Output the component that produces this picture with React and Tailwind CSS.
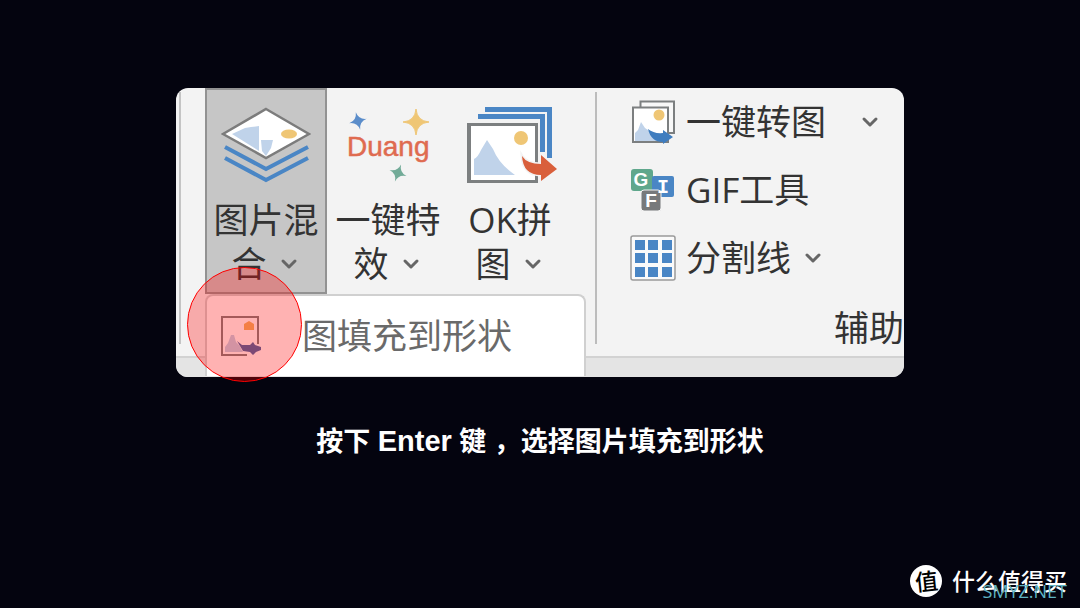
import { ChevronDown } from 'lucide-react'

function LayersIcon() {
  return (
    <svg width="90" height="80" viewBox="0 0 90 80" fill="none" aria-hidden="true">
      <path d="M4 52 45 74 87 52M4 41 45 63 87 41" stroke="#4a86c5" strokeWidth="4" />
      <path d="M45 3 88 28 45 52 2 28Z" fill="#fff" stroke="#7c7c7c" strokeWidth="2.5" />
      <path d="M11 28 24 22 30 21 38 20V45Z" fill="#c0d3ea" />
      <path d="M40 34H52L50 42 45 50 41 45Z" fill="#c0d3ea" />
      <ellipse cx="68" cy="28" rx="8" ry="4.5" fill="#efc675" />
    </svg>
  )
}

function DuangIcon() {
  return (
    <svg width="90" height="80" viewBox="0 0 90 80" aria-hidden="true">
      <path
        d="M0-9Q1-1 9 0 1 1 0 9-1 1-9 0-1-1 0-9Z"
        transform="translate(15 15) rotate(-14)"
        fill="#5b8dca"
      />
      <path d="M73 3Q74 15 86 16 74 17 73 29 72 17 60 16 72 15 73 3Z" fill="#efc675" stroke="#efc675" />
      <path
        d="M0-9Q1-1 9 0 1 1 0 9-1 1-9 0-1-1 0-9Z"
        transform="translate(55 67) rotate(20)"
        fill="#72ab98"
      />
      <text x="4" y="50" fontSize="28" fill="#df6b50" stroke="#df6b50" strokeWidth="0.5" className="font-['Liberation_Sans',sans-serif]">
        Duang
      </text>
    </svg>
  )
}

function StackedPicturesIcon() {
  return (
    <svg width="94" height="80" viewBox="-4 0 94 80" fill="none" aria-hidden="true">
      <path d="M18 3.5H82.5V52" stroke="#4a86c5" strokeWidth="5" />
      <path d="M11 10.5H75.5V46" stroke="#4a86c5" strokeWidth="5" />
      <path d="M0 17H71V77H0Z" fill="#7c7f80" />
      <path d="M4 20H68V74H4Z" fill="#fff" />
      <path d="M7 69V53Q11 51 14 44L20 34 26 43Q32 58 48 69Z" fill="#c0d3ea" />
      <circle cx="54" cy="32" r="7" fill="#efc675" />
      <path
        d="M55 50Q60 58 74 58V49L90 63 74 75V69Q56 69 55 50Z"
        fill="#d95f3b"
        stroke="#f3f3f3"
        strokeWidth="3"
        paintOrder="stroke"
      />
    </svg>
  )
}

function ConvertPictureIcon() {
  return (
    <svg width="46" height="46" viewBox="0 0 46 46" fill="none" aria-hidden="true">
      <path d="M10.5 2.5H44V34H10.5Z" fill="#f8f8f8" stroke="#7c7f80" strokeWidth="2" />
      <path d="M3 8.5H38V43H3Z" fill="#fff" stroke="#7c7f80" strokeWidth="2" />
      <path d="M5 42V34L8 31 11 23 15 29 18 31 27 42Z" fill="#c0d3ea" />
      <circle cx="29" cy="16" r="5.5" fill="#efc675" />
      <path d="M18 30Q24 35 33 34V31L43 38 33 45V43Q21 43 18 30Z" fill="#3f7dbf" />
    </svg>
  )
}

function GifIcon() {
  return (
    <svg
      width="46"
      height="46"
      viewBox="0 0 46 46"
      fontWeight="700"
      fill="#fff"
      textAnchor="middle"
      className="font-['Liberation_Sans',sans-serif]"
      aria-hidden="true"
    >
      <rect x="1" y="2" width="22" height="22" rx="3" fill="#5fa78c" />
      <rect x="22" y="9" width="22" height="21" rx="2" fill="#4a86c5" />
      <rect x="11" y="23" width="20" height="21" rx="3" fill="#77797b" stroke="#f3f3f3" strokeWidth="1" />
      <text x="11" y="19" fontSize="19">G</text>
      <text x="33" y="26" fontSize="20" className="font-['Liberation_Mono',monospace]">I</text>
      <text x="21" y="40" fontSize="19">F</text>
    </svg>
  )
}

function GridIcon() {
  const steps = [5, 18, 32]
  return (
    <svg width="46" height="46" viewBox="0 0 46 46" aria-hidden="true">
      <rect x="1" y="1" width="44" height="44" rx="2" fill="#fafafa" stroke="#9a9a9a" strokeWidth="1.5" />
      {steps.map((y) =>
        steps.map((x) => <rect key={`${x}-${y}`} x={x} y={y} width="10" height="10" fill="#4a86c5" />)
      )}
    </svg>
  )
}

function FillShapeIcon() {
  return (
    <svg width="42" height="42" viewBox="0 0 42 42" fill="none" aria-hidden="true">
      <path d="M27 40H2V2H38V29" fill="#fff" stroke="#7c7f80" strokeWidth="2" />
      <path d="M5 37V32L8 28 11 20H14L16 27 19 30 23 37Z" fill="#c0d3ea" />
      <path d="M24 15V9L29 6 34 9V15Z" fill="#efb663" />
      <path d="M17 26 22 30H30L33 27 35 30 41 32V35L36 37 33 40 30 37 23 36Z" fill="#4468a8" />
    </svg>
  )
}

function Caret() {
  return <ChevronDown className="inline-block h-6 w-6 text-[#666]" strokeWidth={3} aria-hidden="true" />
}

const bigButtons = [
  { first: '图片混', second: '合', icon: LayersIcon, active: true },
  { first: '一键特', second: '效', icon: DuangIcon },
  { first: 'OK拼', second: '图', icon: StackedPicturesIcon },
]

const tools = [
  { label: '一键转图', icon: ConvertPictureIcon, caret: true, gap: 'gap-8' },
  { label: 'GIF工具', icon: GifIcon },
  { label: '分割线', icon: GridIcon, caret: true, gap: 'gap-[10px]' },
]

function RibbonButton({ item }) {
  const Icon = item.icon
  return (
    <button
      type="button"
      className={`flex h-[206px] w-[122px] shrink-0 flex-col items-center border-2 pt-4 leading-[44px] ${
        item.active ? 'border-[#929292] bg-[#c6c6c6]' : 'border-transparent'
      }`}
    >
      <Icon />
      <span className="mt-3 whitespace-nowrap">{item.first}</span>
      <span className="flex items-center gap-[10px]">
        {item.second}
        <Caret />
      </span>
    </button>
  )
}

export default function App() {
  return (
    <main
      lang="zh-CN"
      className="flex min-h-screen flex-col items-center bg-[#04040f] pt-[88px] font-['Open_Sans','Noto_Sans_CJK_SC',sans-serif]"
    >
      <div className="relative w-full max-w-[728px]">
        <section className="relative overflow-hidden rounded-xl bg-[#f3f3f3] text-[35px] text-[#333]">
          <div className="flex border-b-2 border-[#d2d2d2]">
            <div className="mt-1 mb-3 ml-[3px] w-[2px] bg-[#c4c4c4]" />
            <div className="ml-6 flex">
              {bigButtons.map((item) => (
                <RibbonButton key={item.first} item={item} />
              ))}
            </div>
            <div className="mt-1 mb-3 ml-6 w-[2px] bg-[#bcbcbc]" />
            <div className="ml-[33px] min-w-0 flex-1">
              {tools.map(({ label, icon: Icon, caret, gap }) => (
                <button
                  key={label}
                  type="button"
                  className={`flex h-[68px] items-center whitespace-nowrap ${gap ?? ''}`}
                >
                  <span className="flex items-center gap-[10px]">
                    <Icon />
                    {label}
                  </span>
                  {caret && <Caret />}
                </button>
              ))}
              <div className="flex h-16 items-center justify-end pt-2">辅助</div>
            </div>
          </div>
          <div className="h-[19px] bg-[#e4e4e4]" />

          <div className="absolute top-[206px] left-[29px] w-[381px] rounded-t-lg border-2 border-b-0 border-[#d0d0d0] bg-white">
            <button type="button" className="flex h-20 items-center gap-10 pl-[13px] text-[#6a6a6a]">
              <FillShapeIcon />
              图填充到形状
            </button>
          </div>
        </section>
        <div className="pointer-events-none absolute top-[179px] left-[11px] h-[115px] w-[115px] rounded-full border border-[#f00] bg-[#f00]/30" />
      </div>

      <p className="mt-11 font-['Liberation_Sans','Noto_Sans_CJK_SC',sans-serif] text-[27px] leading-10 font-bold text-white">
        按下 <span className="text-[29px]">Enter</span> 键 ，选择图片填充到形状
      </p>

      <footer className="relative mt-auto mr-[13px] mb-[9px] flex items-center gap-[10px] self-end text-white">
        <span className="flex h-8 w-8 items-center justify-center rounded-full bg-white text-[23px] font-medium text-black">
          <span className="-rotate-6">值</span>
        </span>
        <span className="text-[23px] leading-9 font-medium">什么值得买</span>
        <span className="absolute right-0 -bottom-1 text-[18px] leading-6 text-[#5fb4c4]">SMYZ.NET</span>
      </footer>
    </main>
  )
}
